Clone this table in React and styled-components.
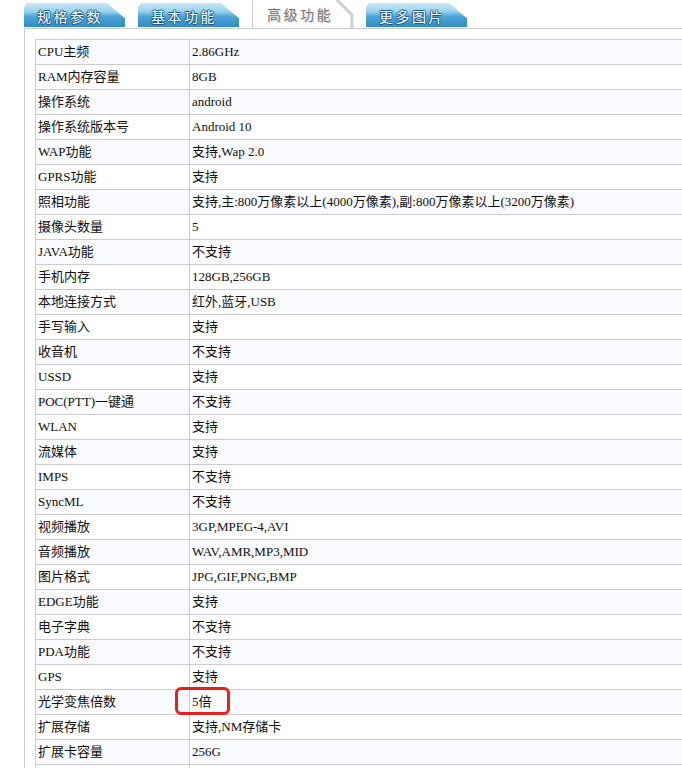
import React from "react";
import styled, { createGlobalStyle } from "styled-components";

const GlobalStyle = createGlobalStyle`
  html, body {
    margin: 0;
    padding: 0;
    background: #fff;
    overflow: hidden;
  }
`;

const Page = styled.div`
  width: 760px;
  font-family: "Liberation Serif", "Noto Sans CJK SC", serif;
`;

const TabBar = styled.div`
  display: flex;
  align-items: flex-end;
  gap: 13px;
  height: 28px;
  padding-left: 24px;
`;

const Tab = styled.div`
  position: relative;
  width: 101px;
  height: ${(p) => (p.$active ? "28px" : "24px")};
  display: flex;
  align-items: ${(p) => (p.$active ? "flex-start" : "center")};
  padding: ${(p) => (p.$active ? "4px 0 0 14px" : "1px 0 0 13px")};
  box-sizing: border-box;
  font-family: "Noto Sans CJK SC", sans-serif;
  font-size: 14px;
  letter-spacing: 2.5px;
  color: ${(p) => (p.$active ? "#777" : "#fff")};
  text-shadow: ${(p) =>
    p.$active
      ? "1px 1px 0 #d8d8d8"
      : "1px 0 0 #1c5d85, -1px 0 0 #1c5d85, 0 1px 0 #1c5d85, 0 -1px 0 #1c5d85"};
  background: ${(p) =>
    p.$active
      ? "#fff"
      : "linear-gradient(to bottom, #c8e7f4 0%, #9ad2ee 35%, #4ea6d8 55%, #2f8bc5 100%)"};
  clip-path: ${(p) =>
    p.$active
      ? "none"
      : "polygon(0 4px, 3px 0, 82% 0, 100% 64%, 100% 100%, 0 100%)"};
  border-left: ${(p) => (p.$active ? "1px solid #cfcfcf" : "none")};
  margin-bottom: ${(p) => (p.$active ? "0" : "1px")};
`;

const Fold = styled.svg`
  position: absolute;
  right: -2px;
  top: 0;
`;

const Edge = styled.span`
  position: absolute;
  right: 0;
  top: 0;
  width: 100%;
  height: 100%;
  background: linear-gradient(to bottom, transparent 0, transparent 60%, #3c8db0 100%);
  clip-path: polygon(100% 64%, 100% 100%, 96% 100%, 96% 64%);
`;

const Content = styled.div`
  margin-left: 24px;
  border-top: 1px solid #cccccc;
  border-left: 1px solid #cccccc;
  padding: 10px 0 0 10px;
`;

const Table = styled.table`
  border-collapse: collapse;
  width: 700px;
  font-size: 13px;
  color: #111;
`;

const Row = styled.tr`
  background: ${(p) => (p.$odd ? "#f9fafd" : "#ffffff")};
`;

const Cell = styled.td`
  position: relative;
  height: 24px;
  padding: 0 2px;
  line-height: 16px;
  border: 1px solid #cccccc;
  white-space: nowrap;
  width: ${(p) => (p.$label ? "149px" : "auto")};
`;

const Mark = styled.span`
  position: absolute;
  left: -15px;
  top: -3px;
  width: 55px;
  height: 28px;
  box-sizing: border-box;
  border: 3px solid #e8211f;
  border-radius: 6px;
`;

const tabs = ["规格参数", "基本功能", "高级功能", "更多图片"];

const rows = [
  ["CPU主频", "2.86GHz"],
  ["RAM内存容量", "8GB"],
  ["操作系统", "android"],
  ["操作系统版本号", "Android 10"],
  ["WAP功能", "支持,Wap 2.0"],
  ["GPRS功能", "支持"],
  ["照相功能", "支持,主:800万像素以上(4000万像素),副:800万像素以上(3200万像素)"],
  ["摄像头数量", "5"],
  ["JAVA功能", "不支持"],
  ["手机内存", "128GB,256GB"],
  ["本地连接方式", "红外,蓝牙,USB"],
  ["手写输入", "支持"],
  ["收音机", "不支持"],
  ["USSD", "支持"],
  ["POC(PTT)一键通", "不支持"],
  ["WLAN", "支持"],
  ["流媒体", "支持"],
  ["IMPS", "不支持"],
  ["SyncML", "不支持"],
  ["视频播放", "3GP,MPEG-4,AVI"],
  ["音频播放", "WAV,AMR,MP3,MID"],
  ["图片格式", "JPG,GIF,PNG,BMP"],
  ["EDGE功能", "支持"],
  ["电子字典", "不支持"],
  ["PDA功能", "不支持"],
  ["GPS", "支持"],
  ["光学变焦倍数", "5倍", true],
  ["扩展存储", "支持,NM存储卡"],
  ["扩展卡容量", "256G"],
  ["", ""],
];

const App = () => {
  return (
    <Page>
      <GlobalStyle />
      <TabBar>
        {tabs.map((t, i) => (
          <Tab key={t} $active={i === 2}>
            {t}
            {i === 2 ? (
              <Fold width="20" height="28" viewBox="0 0 20 28">
                <path d="M2 0 L17 15 L17 28" fill="none" stroke="#cfcfcf" strokeWidth="3" />
              </Fold>
            ) : (
              <Edge />
            )}
          </Tab>
        ))}
      </TabBar>
      <Content>
        <Table>
          <tbody>
            {rows.map(([label, value, marked], i) => (
              <Row key={i} $odd={i % 2 === 0}>
                <Cell $label>{label}</Cell>
                <Cell>
                  {value}
                  {marked && <Mark />}
                </Cell>
              </Row>
            ))}
          </tbody>
        </Table>
      </Content>
    </Page>
  );
};

export default App;
